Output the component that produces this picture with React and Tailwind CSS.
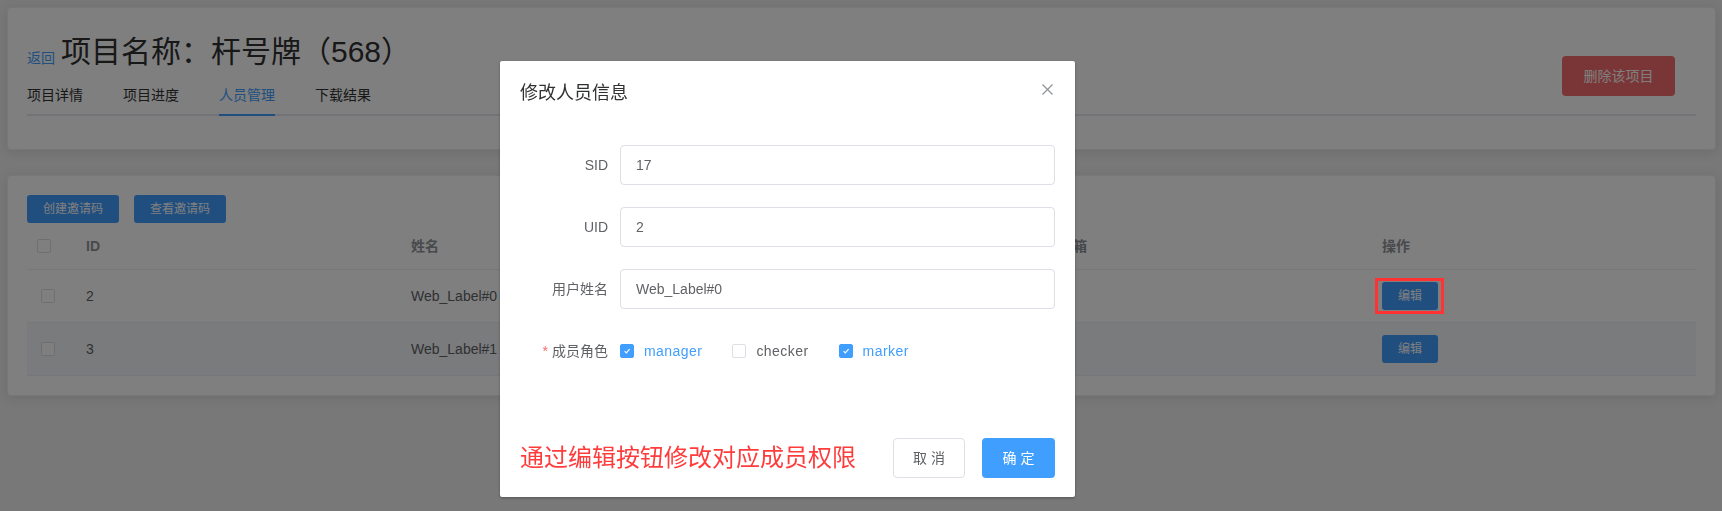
import React from 'react';

const font = "font-['Liberation_Sans','Noto_Sans_CJK_SC',sans-serif]";

function Box({ checked }) {
  // element-style checkbox
  if (checked) {
    return (
      <span className="w-[14px] h-[14px] rounded-[2px] bg-[#409eff] border border-[#409eff] flex items-center justify-center shrink-0">
        <svg width="10" height="10" viewBox="0 0 10 10" fill="none">
          <path d="M2.6 5.2 L4.3 6.9 L7.6 3.1" stroke="#fff" strokeWidth="1.1" />
        </svg>
      </span>
    );
  }
  return <span className="w-[14px] h-[14px] rounded-[2px] bg-white border border-[#dcdfe6] shrink-0 block" />;
}

const members = [
  { id: 2, name: 'Web_Label#0' },
  { id: 3, name: 'Web_Label#1', hover: true },
];

const cols = 'grid grid-cols-[49px_325px_648px_323px_1fr]';

export default function App() {
  return (
    <div className={`${font} relative min-h-[511px] bg-[#f0f0f0] pt-[7px] pb-[20px] text-[#606266]`}>
      {/* header card */}
      <div className="ml-[7px] mr-[6px] h-[143px] bg-white rounded-[4px] border border-[#ebeef5] shadow-[0_2px_12px_0_rgba(0,0,0,0.1)] px-[19px] pt-[19px]">
        <div className="h-[49px] flex justify-between items-start">
          <div className="flex items-end h-[47px] gap-[6px]">
            <a className="text-[14px] text-[#409eff] leading-[20px] mb-[6px]">返回</a>
            <h1 className="text-[30px] leading-[45px] text-[#303133]">项目名称：杆号牌（568）</h1>
          </div>
          <button className="mt-[29px] mr-[21px] h-[40px] w-[113px] rounded-[4px] bg-[#f56c6c] text-white text-[14px]">删除该项目</button>
        </div>
        <div className="flex border-b-2 border-[#e4e7ed]">
          {['项目详情', '项目进度', '人员管理', '下载结果'].map((t, i) => (
            <div key={t} className={`-mb-[2px] ${i === 0 ? 'pr-[20px]' : 'px-[20px]'}`}>
              <span className={`block text-[14px] leading-[38px] border-b-2 ${t === '人员管理' ? 'text-[#409eff] border-[#409eff]' : 'text-[#303133] border-transparent'}`}>{t}</span>
            </div>
          ))}
        </div>
      </div>

      {/* members card */}
      <div className="mt-[25px] ml-[7px] mr-[6px] bg-white rounded-[4px] border border-[#ebeef5] shadow-[0_2px_12px_0_rgba(0,0,0,0.1)] px-[19px] pt-[19px] pb-[19px]">
        <div className="flex gap-[15px]">
          <button className="h-[28px] w-[92px] rounded-[3px] bg-[#409eff] text-white text-[12px]">创建邀请码</button>
          <button className="h-[28px] w-[92px] rounded-[3px] bg-[#409eff] text-white text-[12px]">查看邀请码</button>
        </div>
        <div className="text-[14px]">
          <div className={`${cols} h-[47px] items-center border-b border-[#ebeef5] font-bold text-[#909399]`}>
            <div className="pl-[10px]"><Box /></div>
            <div className="pl-[10px]">ID</div>
            <div className="pl-[10px]">姓名</div>
            <div className="pl-[10px]">邮箱</div>
            <div className="pl-[10px]">操作</div>
          </div>
          {members.map((m, i) => (
            <div key={m.id} className={`${cols} h-[53px] items-center border-b border-[#ebeef5] ${m.hover ? 'bg-[#f5f7fa]' : ''}`}>
              <div className="pl-[14px]"><Box /></div>
              <div className="pl-[10px]">{m.id}</div>
              <div className="pl-[10px]">{m.name}</div>
              <div className="pl-[10px]"></div>
              <div className="pl-[10px]">
                <span className="relative inline-block">
                  <button className="h-[28px] w-[56px] rounded-[3px] bg-[#409eff] text-white text-[12px] block">编辑</button>
                  {i === 0 && (
                    <span className="absolute z-30 -left-[7px] -top-[4px] w-[69px] h-[36px] border-[3px] border-[#ff3333]" />
                  )}
                </span>
              </div>
            </div>
          ))}
        </div>
      </div>

      {/* modal mask */}
      <div className="fixed inset-0 z-10 bg-black/50" />

      {/* dialog */}
      <div className="fixed z-20 left-[500px] top-[61px] w-[575px] bg-white rounded-[2px] shadow-[0_1px_3px_rgba(0,0,0,0.3)]">
        <div className="relative px-[20px] pt-[20px] pb-[10px]">
          <span className="block text-[18px] leading-[24px] text-[#303133]">修改人员信息</span>
          <svg className="absolute right-[22px] top-[23px]" width="11" height="11" viewBox="0 0 11 11" fill="none">
            <path d="M0.5 0.5 L10.5 10.5 M10.5 0.5 L0.5 10.5" stroke="#909399" strokeWidth="1.2" />
          </svg>
        </div>
        <div className="px-[20px] py-[30px] text-[14px]">
          {[['SID', '17'], ['UID', '2'], ['用户姓名', 'Web_Label#0']].map(([l, v]) => (
            <div key={l} className="flex mb-[22px]">
              <label className="w-[100px] pr-[12px] text-right leading-[40px] text-[#606266]">{l}</label>
              <div className="flex-1 h-[40px] border border-[#dcdfe6] rounded-[4px] px-[15px] flex items-center text-[#606266]">{v}</div>
            </div>
          ))}
          <div className="flex mb-[22px]">
            <label className="w-[100px] pr-[12px] text-right leading-[40px] text-[#606266]">
              <span className="text-[#f56c6c] mr-[4px]">*</span>成员角色
            </label>
            <div className="flex items-center h-[40px]">
              {[['manager', true], ['checker', false], ['marker', true]].map(([r, c]) => (
                <div key={r} className="flex items-center mr-[30px]">
                  <Box checked={c} />
                  <span className={`pl-[10px] tracking-[0.45px] ${c ? 'text-[#409eff]' : 'text-[#606266]'}`}>{r}</span>
                </div>
              ))}
            </div>
          </div>
        </div>
        <div className="flex items-center justify-between px-[20px] pt-[15px] pb-[19px]">
          <span className="text-[24px] text-[#ff3c3c] leading-[32px]">通过编辑按钮修改对应成员权限</span>
          <div className="flex">
            <button className="h-[40px] w-[72px] border border-[#dcdfe6] rounded-[4px] bg-white text-[14px] text-[#606266]">取 消</button>
            <button className="ml-[17px] h-[40px] w-[73px] rounded-[4px] bg-[#409eff] text-[14px] text-white">确 定</button>
          </div>
        </div>
      </div>
    </div>
  );
}
